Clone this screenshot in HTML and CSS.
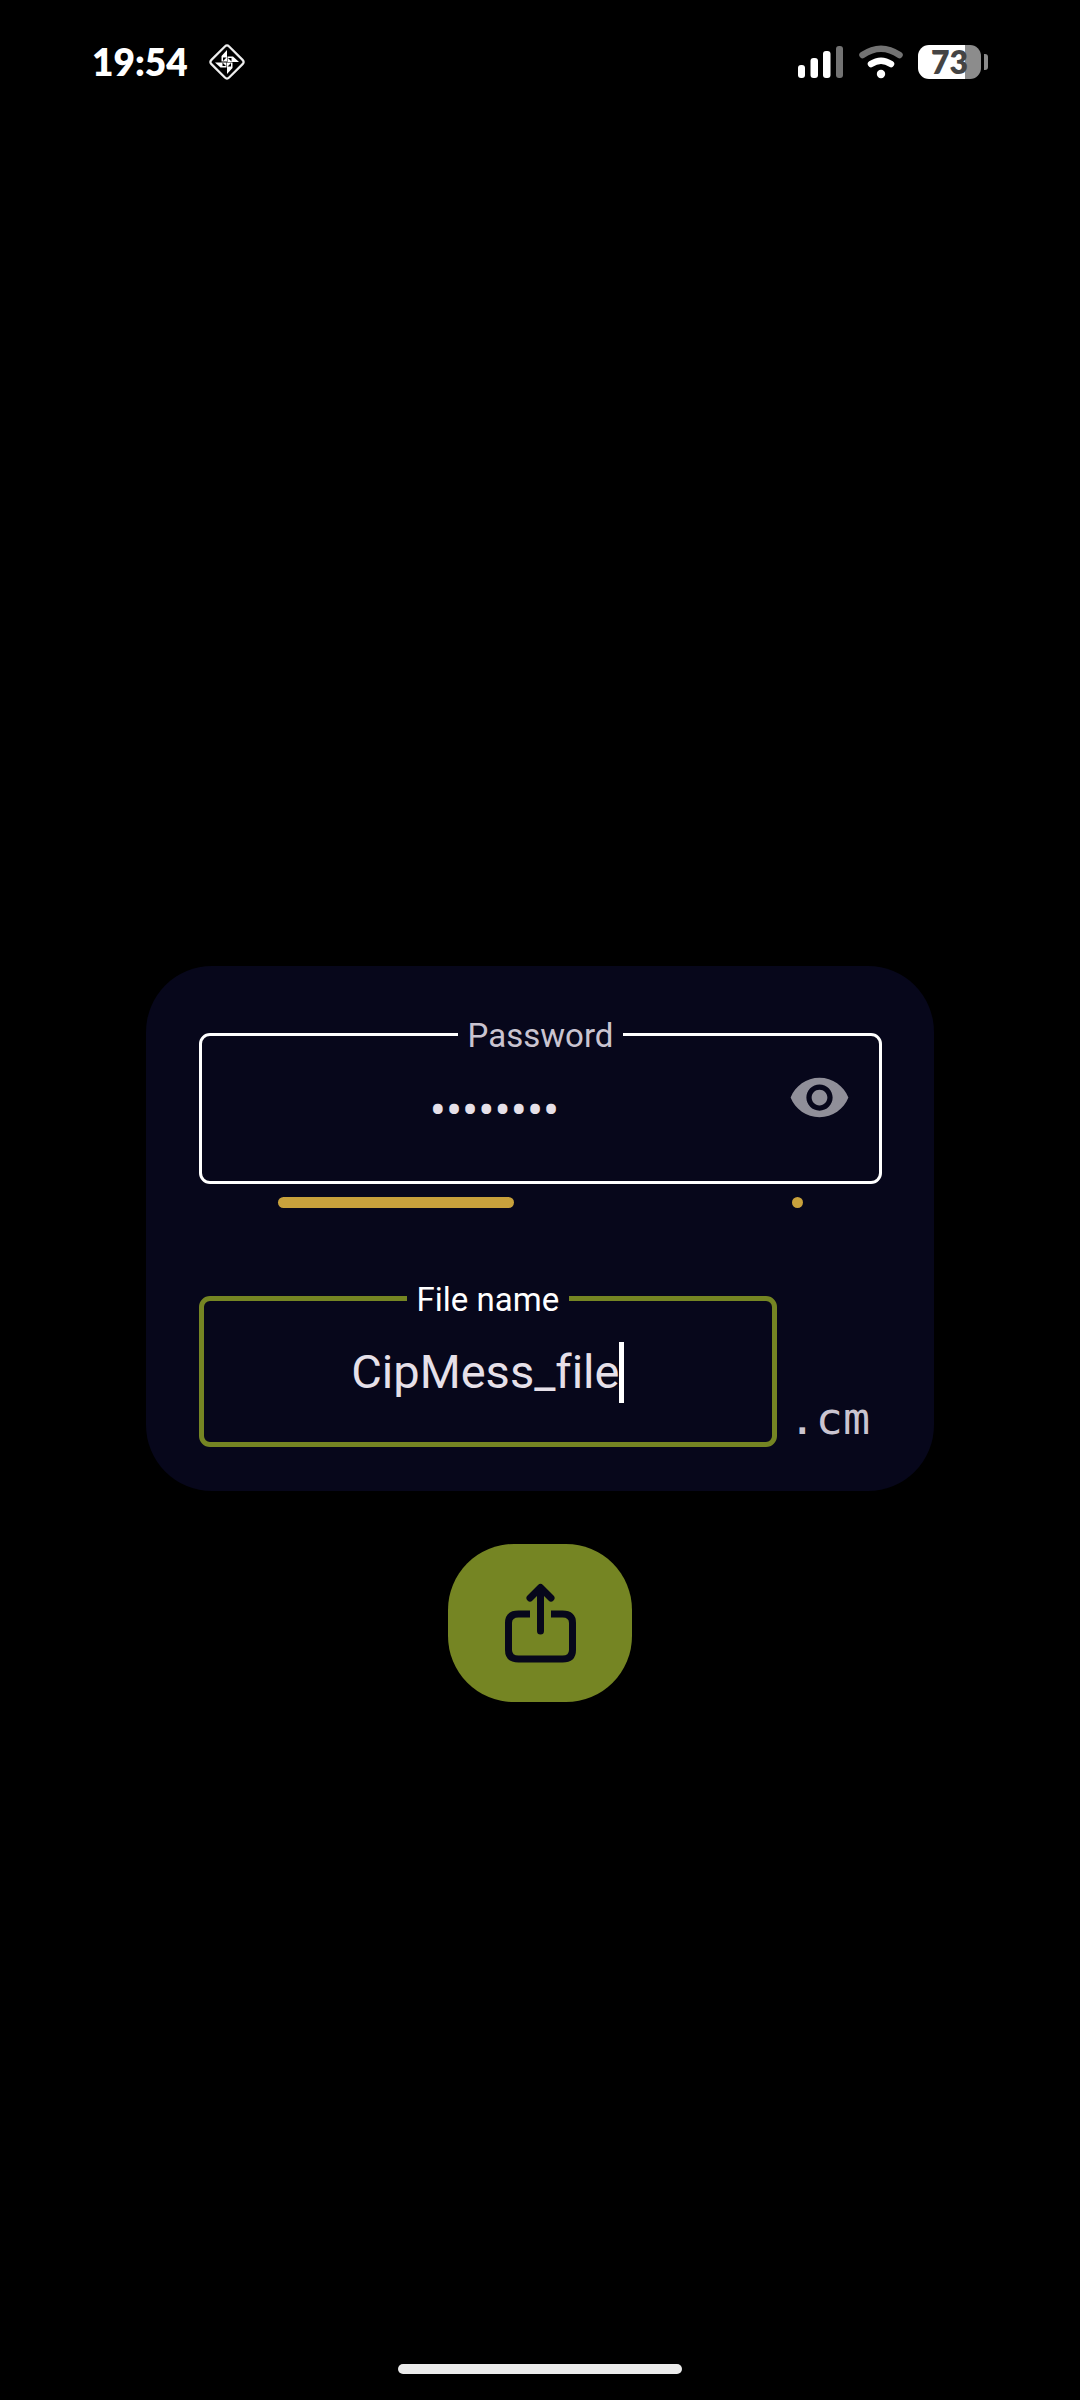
FILE: index.html
```html
<!DOCTYPE html>
<html lang="en">
<head>
<meta charset="utf-8">
<meta name="viewport" content="width=device-width, initial-scale=1">
<title>Save file</title>
<link rel="stylesheet" href="styles.css">
</head>
<body>
<header class="status">
  <div class="status-group">
    <time class="clock">19:54</time>
    <svg class="badge" viewBox="0 0 38 38" width="38" height="38" aria-hidden="true">
      <rect x="6.500" y="6.500" width="25" height="25" rx="3" transform="rotate(45 19 19)" fill="none" stroke="#eee" stroke-width="2.200"/>
      <g fill="#fff">
        <path d="M19.500 7V13.500H13zM31.500 19.500H25V25.500zM19 31.500V25H25zM7 19L13 12.500V19z" opacity="0"/>
        <path d="M19 7V18.500H13.500V13zM31 19H19.500V13.500H25zM19 31V19.500H24.500V25zM7 19.500H18.500V24.500H12.500z"/>
      </g>
      <path fill="#000" d="M15 18V14.500H18.500zM20 15H23.500V18.500zM23 20V23.500H19.500zM18 23H14.500V19.500z"/>
    </svg>
  </div>
  <div class="status-group status-right">
    <svg viewBox="0 0 46 34" width="46" height="34" aria-hidden="true">
      <g fill="#fff"><rect x="0" y="20" width="7" height="13" rx="3"/><rect x="12.500" y="13" width="7.500" height="20" rx="3"/><rect x="25" y="6" width="7.500" height="27" rx="3"/></g>
      <rect x="38" y="1" width="7" height="32" rx="3" fill="#737373"/>
    </svg>
    <svg viewBox="0 0 44 34" width="44" height="34" aria-hidden="true">
      <path d="M3.500 10Q22 -2.500 40.500 10" fill="none" stroke="#737373" stroke-width="6.500" stroke-linecap="round"/>
      <path d="M12 19Q22 12.500 32 19" fill="none" stroke="#fff" stroke-width="6.500" stroke-linecap="round"/>
      <circle cx="22" cy="29" r="4.200" fill="#fff"/>
    </svg>
    <div class="battery"><span class="battery-level">73</span></div>
  </div>
</header>

<main class="content">
  <form class="form" id="save">
    <section class="card">
      <fieldset class="field">
        <legend class="field-label"><label for="password">Password</label></legend>
        <div class="field-row">
          <input class="text password" id="password" type="password" value="password">
          <button class="reveal" type="button" aria-label="Show password">
            <svg viewBox="0 0 24 24" width="63" height="63" aria-hidden="true"><path fill="currentColor" d="M12 4.500C7 4.500 2.730 7.610 1 12c1.730 4.390 6 7.500 11 7.500s9.270-3.110 11-7.500c-1.730-4.390-6-7.500-11-7.500zM12 17c-2.760 0-5-2.240-5-5s2.240-5 5-5 5 2.240 5 5-2.240 5-5 5zm0-8c-1.660 0-3 1.340-3 3s1.340 3 3 3 3-1.340 3-3-1.340-3-3-3z"/></svg>
          </button>
        </div>
      </fieldset>
      <div class="strength">
        <progress class="strength-bar" max="100" value="45" aria-label="Password strength"></progress>
      </div>
      <div class="file-row">
        <fieldset class="field field-active">
          <legend class="field-label"><label for="filename">File name</label></legend>
          <div class="field-row field-centered">
            <input class="text filename" id="filename" type="text" value="CipMess_file">
            <span class="caret"></span>
          </div>
        </fieldset>
        <span class="suffix">.cm</span>
      </div>
    </section>
    <button class="share" type="submit" aria-label="Share">
      <svg viewBox="0 0 72 80" width="72" height="80" fill="none" stroke="currentColor" stroke-width="7" aria-hidden="true">
        <path d="M26 31H14.500Q4.500 31 4.500 40V67Q4.500 76 14.500 76H58.500Q68.500 76 68.500 67V40Q68.500 31 58.500 31H47"/>
        <path d="M36.500 48V5M26 15L36.500 4.500L47 15" stroke-linecap="round" stroke-linejoin="round"/>
      </svg>
    </button>
  </form>
</main>

<footer class="nav"><div class="nav-handle"></div></footer>
</body>
</html>
```

FILE: styles.css
```css
* { box-sizing: border-box; }

body {
  margin: 0;
  min-height: 100vh;
  display: flex;
  flex-direction: column;
  background: #000;
  color: #e6e0e9;
  font-family: Roboto, "Liberation Sans", sans-serif;
}

button {
  border: 0;
  padding: 0;
  cursor: pointer;
}

svg { display: block; }

.status {
  height: 124px;
  padding: 0 92px;
  display: flex;
  align-items: center;
  justify-content: space-between;
  color: #fff;
}

.status-group {
  display: flex;
  align-items: center;
  gap: 20px;
}

.status-right { gap: 15px; }

.clock {
  font: 800 37px/44px Lato, sans-serif;
}

.battery {
  width: 63px;
  height: 34px;
  margin-right: 7px;
  border-radius: 11px;
  background: linear-gradient(to right, #fff 75%, #8c8c8c 75%);
  color: #444;
  display: flex;
  justify-content: center;
  align-items: center;
  position: relative;
}

.battery::after {
  content: "";
  position: absolute;
  left: 66px;
  top: 9px;
  width: 4px;
  height: 16px;
  border-radius: 0 3px 3px 0;
  background: #8c8c8c;
}

.battery-level {
  font: 800 32px/34px Lato, sans-serif;
}

.content {
  flex: 1;
  padding: 232px 146px 0;
  display: flex;
  align-items: center;
}

.form {
  flex: 1;
  min-width: 0;
  display: flex;
  flex-direction: column;
  align-items: center;
  gap: 53px;
}

.card {
  width: 100%;
  padding: 46px 52px 44px 53px;
  border-radius: 66px;
  background: #07071b;
}

.field {
  margin: 0;
  padding: 0;
  min-width: 0;
  height: 172px;
  border: 3px solid #fff;
  border-radius: 11px;
}

.field-active {
  flex: 1;
  height: 171px;
  border: 5px solid #758523;
}

.field-label {
  margin: 0 auto;
  padding: 4px 10px 0;
  font-size: 33px;
  line-height: 40px;
  color: #cac4d0;
}

.field-active .field-label { color: #fff; }

.field-row {
  height: 110px;
  padding: 0 28px 0 43px;
  display: flex;
  align-items: center;
}

.field-centered {
  height: 104px;
  padding: 0;
  justify-content: center;
}

.text {
  padding: 0;
  border: 0;
  outline: 0;
  background: none;
  color: #e6e0e9;
  font: 47px/62px Roboto, "Liberation Sans", sans-serif;
  font-variant-ligatures: none;
}

.password {
  flex: 1;
  width: 0;
  min-width: 0;
  text-align: center;
  font-size: 48px;
}

.filename { field-sizing: content; }

.caret {
  width: 5px;
  height: 61px;
  background: #fff;
}

.reveal {
  margin: 0 0 28px 44px;
  background: none;
  color: #908f99;
}

.strength {
  margin: 13px 79px 0;
  display: grid;
}

.strength-bar,
.strength::after {
  grid-area: 1 / 1;
  height: 11px;
  border-radius: 6px;
}

.strength-bar {
  width: 100%;
  appearance: none;
  border: 0;
  background: none;
}

.strength-bar::-webkit-progress-bar { background: none; }

.strength-bar::-webkit-progress-value {
  border-radius: 6px;
  background: #c8a13c;
}

.strength::after {
  content: "";
  width: 11px;
  justify-self: end;
  background: #c8a13c;
}

.file-row {
  margin-top: 68px;
  display: flex;
  align-items: flex-end;
  gap: 12px;
}

.suffix {
  padding-right: 12px;
  font: 45px/56px "DejaVu Sans Mono", monospace;
  color: #cac4d0;
}

.share {
  width: 184px;
  height: 158px;
  border-radius: 66px;
  background: #758523;
  color: #07071b;
  display: flex;
  align-items: center;
  justify-content: center;
}

.nav {
  height: 88px;
  padding-bottom: 26px;
  display: flex;
  align-items: flex-end;
  justify-content: center;
}

.nav-handle {
  width: 284px;
  height: 10px;
  border-radius: 5px;
  background: #ebebeb;
}
```
